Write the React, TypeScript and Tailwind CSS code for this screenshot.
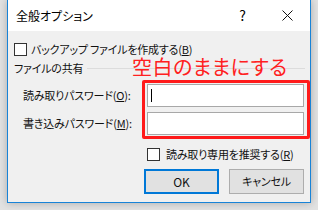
import React from 'react';

const jp = "font-['Yu_Gothic_UI','Noto_Sans_CJK_JP',sans-serif] [font-feature-settings:'palt']";

function Box() {
  return <span className="w-[13px] h-[13px] border border-[#333333] bg-white shrink-0" />;
}

export default function App() {
  return (
    <div className={`w-[318px] h-[210px] bg-[#e2e2e2] overflow-hidden ${jp}`}>
      <div className="ml-[7px] w-[304px] h-[203px] border-x border-b border-[#1883d7] bg-[#f0f0f0] flex flex-col shadow-[0_0_8px_rgba(0,0,0,0.25)]">
        {/* title bar */}
        <div className="h-[31px] bg-white flex items-center text-[12px] text-black">
          <span className="ml-[8px]">全般オプション</span>
          <span className="ml-auto mr-[36px] text-[14px]">?</span>
          <svg width="11" height="11" viewBox="0 0 11 11" className="mr-[17px]">
            <path d="M0.5 0.5 L10.5 10.5 M10.5 0.5 L0.5 10.5" stroke="#111" strokeWidth="1" />
          </svg>
        </div>

        <div className="relative flex-1 pl-[6px] text-[11px] leading-[13px] tracking-[-0.2px] text-[#111]">
          <label className="mt-[12px] h-[13px] flex items-center gap-[4px]">
            <Box />
            <span>
              バックアップ ファイルを作成する(<span className="underline">B</span>)
            </span>
          </label>

          <div className="mt-[5px] h-[14px] flex items-center">
            <span>ファイルの共有</span>
            <span className="ml-[4px] mr-[5px] flex-1 h-px bg-[#dcdcdc]" />
          </div>

          <div className="mt-[9px] flex flex-col gap-[5px]">
            <div className="flex items-center">
              <span className="ml-[9px]">
                読み取りパスワード(<span className="underline">O</span>):
              </span>
              <div className="ml-auto mr-[6px] w-[157px] h-[23px] border border-[#a8a8a8] bg-white flex items-center pl-[3px]">
                <span className="w-px h-[13px] bg-black" />
              </div>
            </div>
            <div className="flex items-center">
              <span className="ml-[9px]">
                書き込みパスワード(<span className="underline">M</span>):
              </span>
              <div className="ml-auto mr-[6px] w-[157px] h-[23px] border border-[#a8a8a8] bg-white" />
            </div>
          </div>

          <label className="mt-[13px] ml-[133px] h-[13px] flex items-center gap-[6px]">
            <Box />
            <span>
              読み取り専用を推奨する(<span className="underline">R</span>)
            </span>
          </label>

          <div className="mt-[8px] ml-[130px] flex gap-[10px]">
            <button className="w-[75px] h-[25px] border-2 border-[#0078d7] bg-[#e1e1e1] text-[12px]">OK</button>
            <button className="w-[75px] h-[25px] border border-[#adadad] bg-[#e1e1e1] text-[11px]">キャンセル</button>
          </div>

          {/* annotation */}
          <span className="absolute left-[124px] top-[27px] text-[20px] leading-[18px] text-[#ff2020] tracking-[0.5px]">
            空白のままにする
          </span>
          <div className="absolute left-[134px] top-[49px] w-[168px] h-[59px] border-[3px] border-[#ff1a1a] rounded-[2px]" />
        </div>
      </div>
    </div>
  );
}
